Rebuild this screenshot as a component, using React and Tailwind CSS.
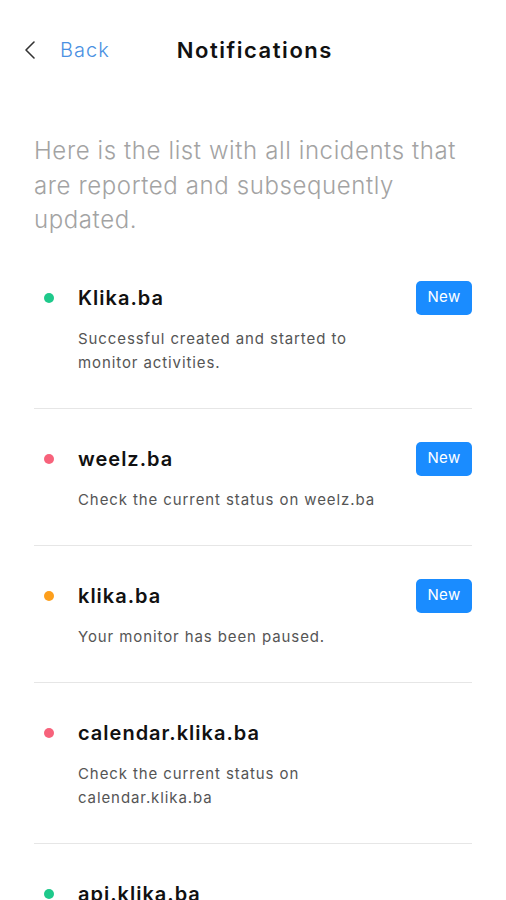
import React from "react";

const items = [
  { dot: "bg-[#1ec98b]", title: "Klika.ba", desc: ["Successful created and started to", "monitor activities."], badge: true },
  { dot: "bg-[#f7627b]", title: "weelz.ba", desc: ["Check the current status on weelz.ba"], badge: true },
  { dot: "bg-[#fd9f1c]", title: "klika.ba", desc: ["Your monitor has been paused."], badge: true },
  { dot: "bg-[#f7627b]", title: "calendar.klika.ba", desc: ["Check the current status on", "calendar.klika.ba"], badge: false },
  { dot: "bg-[#1ec98b]", title: "api.klika.ba", desc: ["Check the current status on api.klika.ba"], badge: false },
];

export default function App() {
  return (
    <div className="w-[506px] h-[900px] overflow-hidden bg-white" style={{ fontFamily: "Inter, 'Noto Sans', sans-serif" }}>
      <div className="flex items-center h-[40px] mt-[30px] pl-[24px]">
        <svg width="12" height="20" viewBox="0 0 12 20" className="mr-[24px]">
          <path d="M10 2 L2 10 L10 18" fill="none" stroke="#333" strokeWidth="1.6" strokeLinecap="round" strokeLinejoin="round" />
        </svg>
        <span className="text-[20px] text-[#4a90e2] font-light tracking-[0.05em]">Back</span>
        <span className="ml-[67px] text-[22px] font-semibold text-[#111] tracking-[0.07em]">Notifications</span>
      </div>
      <p className="mt-[64px] pl-[34px] pr-[20px] text-[24px] leading-[34.5px] font-light text-[#a3a3a3] tracking-[0.025em]">
        Here is the list with all incidents that are reported and subsequently updated.
      </p>
      <div className="mt-[43px] px-[34px]">
        {items.map((it, i) => (
          <div key={i} className={`flex flex-col ${i === 0 ? "" : "pt-[33px]"} pb-[33px] border-b border-[#e6e6e6]`}>
            <div className="flex items-center h-[34px]">
              <div className="w-[44px] flex">
                <span className={`ml-[10px] w-[10px] h-[10px] rounded-full ${it.dot}`} />
              </div>
              <span className="text-[20px] font-semibold text-[#111] flex-1 tracking-[0.05em]">{it.title}</span>
              {it.badge && (
                <span className="w-[56px] h-[34px] rounded-[5px] bg-[#1a8cff] text-white text-[15px] flex items-center justify-center tracking-[0.02em]">New</span>
              )}
            </div>
            <div className="pl-[44px] mt-[12px] text-[15px] leading-[24px] text-[#555] tracking-[0.06em]">
              {it.desc.map((d, j) => (
                <div key={j}>{d}</div>
              ))}
            </div>
          </div>
        ))}
      </div>
    </div>
  );
}
